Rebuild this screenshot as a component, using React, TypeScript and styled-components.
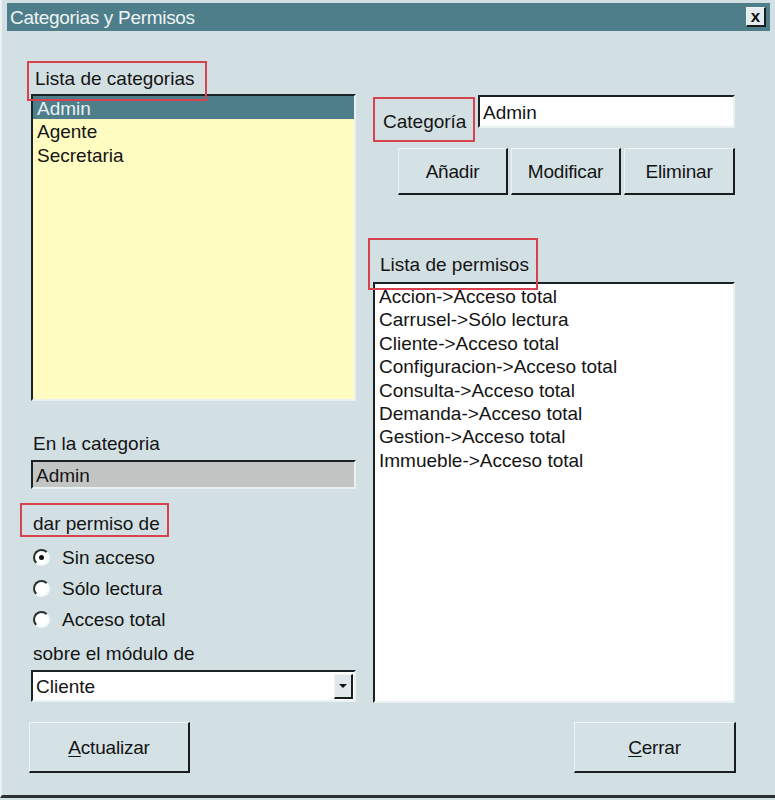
import React from 'react';
import styled, { createGlobalStyle, css } from 'styled-components';

const GlobalStyle = createGlobalStyle`
  html, body {
    margin: 0;
    padding: 0;
    background: #d3e0e3;
  }
  body {
    font-family: "Liberation Sans", Arial, sans-serif;
    color: #141414;
  }
`;

const sunken = css`
  border-style: solid;
  border-width: 2px;
  border-color: #1c2224 #e9f1f2 #e9f1f2 #1c2224;
`;

const raised = css`
  border-style: solid;
  border-width: 1px 2px 2px 1px;
  border-color: #eef4f5 #1a1d1e #1a1d1e #eef4f5;
`;

const Frame = styled.div`
  width: 775px;
  height: 798px;
  box-sizing: border-box;
  padding: 3px 5px 0 5px;
  border-left: 2px solid #eaf1f2;
  border-bottom: 3px solid #2b3133;
  display: flex;
  flex-direction: column;
`;

const TitleBar = styled.div`
  height: 28px;
  background: #4f7e8b;
  display: flex;
  align-items: center;
  justify-content: space-between;
  padding: 0 4px 0 3px;
`;

const Title = styled.span`
  color: #eef3f4;
  font-size: 19px;
  letter-spacing: -0.3px;
  padding-top: 2px;
`;

const CloseButton = styled.div`
  width: 20px;
  height: 20px;
  box-sizing: border-box;
  background: #e4ecee;
  ${raised};
  display: flex;
  align-items: center;
  justify-content: center;
  font-weight: bold;
  font-size: 17px;
  line-height: 1;
  color: #111;
`;

const Body = styled.div`
  flex: 1;
  display: flex;
  flex-direction: column;
  padding: 36px 35px 0 24px;
`;

const Columns = styled.div`
  display: flex;
  gap: 17px;
`;

const LeftColumn = styled.div`
  width: 325px;
  display: flex;
  flex-direction: column;
`;

const RightColumn = styled.div`
  width: 362px;
  display: flex;
  flex-direction: column;
`;

const Label = styled.div<{ $indent?: number; $top?: number }>`
  position: relative;
  font-size: 19px;
  height: 20px;
  line-height: 24px;
  margin-left: ${p => p.$indent ?? 2}px;
  margin-top: ${p => p.$top ?? 0}px;
  white-space: nowrap;
`;

// red annotation rectangle drawn over the label
const Mark = styled.span<{ $l: number; $t: number; $w: number; $h: number }>`
  position: absolute;
  left: ${p => p.$l}px;
  top: ${p => p.$t}px;
  width: ${p => p.$w}px;
  height: ${p => p.$h}px;
  box-sizing: border-box;
  border: 2px solid #d6434f;
  pointer-events: none;
`;

const ListBox = styled.div<{ $bg: string; $height: number; $top: number }>`
  ${sunken};
  background: ${p => p.$bg};
  height: ${p => p.$height}px;
  margin-top: ${p => p.$top}px;
  box-sizing: border-box;
  overflow: hidden;
`;

const ListRow = styled.div<{ $selected?: boolean }>`
  height: 23.4px;
  line-height: 26px;
  font-size: 19px;
  padding-left: 4px;
  white-space: nowrap;
  background: ${p => (p.$selected ? '#4f7e8b' : 'transparent')};
  color: ${p => (p.$selected ? '#e9f0f2' : '#141414')};
`;

const Field = styled.div<{ $bg: string; $height: number; $top: number; $width?: number }>`
  ${sunken};
  background: ${p => p.$bg};
  height: ${p => p.$height}px;
  margin-top: ${p => p.$top}px;
  width: ${p => (p.$width ? `${p.$width}px` : 'auto')};
  box-sizing: border-box;
  display: flex;
  align-items: center;
  justify-content: space-between;
  padding-left: 3px;
  font-size: 19px;
`;

const FieldText = styled.span`
  padding-top: 2px;
`;

const RadioGroup = styled.div`
  margin-top: 9px;
  display: flex;
  flex-direction: column;
`;

const RadioRow = styled.div`
  height: 31px;
  display: flex;
  align-items: center;
  gap: 12px;
  padding: 2px 0 0 2px;
  box-sizing: border-box;
  font-size: 19px;
`;

const RadioDot = styled.span<{ $checked?: boolean }>`
  width: 17px;
  height: 17px;
  box-sizing: border-box;
  border-radius: 50%;
  background: #ffffff;
  border: 2px solid;
  border-color: #2a2f30 #f4f8f9 #f4f8f9 #2a2f30;
  display: flex;
  align-items: center;
  justify-content: center;
  &::after {
    content: '';
    width: 5px;
    height: 5px;
    border-radius: 50%;
    background: ${p => (p.$checked ? '#111' : 'transparent')};
  }
`;

const DropButton = styled.div`
  width: 19px;
  height: 25px;
  margin-right: 1px;
  background: #dfe8ea;
  ${raised};
  box-sizing: border-box;
  display: flex;
  align-items: center;
  justify-content: center;
  &::after {
    content: '';
    border-left: 4px solid transparent;
    border-right: 4px solid transparent;
    border-top: 4px solid #111;
  }
`;

const CategoryRow = styled.div`
  margin-top: 28px;
  height: 47px;
  display: flex;
  align-items: flex-start;
`;

const CategoryLabel = styled.div`
  position: relative;
  width: 105px;
  height: 47px;
  box-sizing: border-box;
  display: flex;
  align-items: flex-end;
  padding: 0 0 9px 10px;
  font-size: 19px;
`;

const ButtonRow = styled.div`
  display: flex;
  gap: 3px;
  margin: 6px 0 0 25px;
`;

const Button = styled.div<{ $width: number; $height?: number }>`
  width: ${p => p.$width}px;
  height: ${p => p.$height ?? 47}px;
  box-sizing: border-box;
  background: #d5e2e5;
  ${raised};
  display: flex;
  align-items: center;
  justify-content: center;
  padding-top: 2px;
  font-size: 19px;
  letter-spacing: -0.2px;
`;

const Footer = styled.div`
  margin: 19px -1px 0 -2px;
  display: flex;
  justify-content: space-between;
`;

const Key = styled.span`
  text-decoration: underline;
  text-underline-offset: 2px;
`;

const categories = ['Admin', 'Agente', 'Secretaria'];

const permissions = [
  'Accion->Acceso total',
  'Carrusel->Sólo lectura',
  'Cliente->Acceso total',
  'Configuracion->Acceso total',
  'Consulta->Acceso total',
  'Demanda->Acceso total',
  'Gestion->Acceso total',
  'Immueble->Acceso total',
];

const access = [
  { label: 'Sin acceso', checked: true },
  { label: 'Sólo lectura', checked: false },
  { label: 'Acceso total', checked: false },
];

const App: React.FC = () => (
  <>
    <GlobalStyle />
    <Frame>
      <TitleBar>
        <Title>Categorias y Permisos</Title>
        <CloseButton>x</CloseButton>
      </TitleBar>
      <Body>
        <Columns>
          <LeftColumn>
            <Label $indent={4}>
              Lista de categorias
              <Mark $l={-8} $t={-6} $w={180} $h={40} />
            </Label>
            <ListBox $bg="#fffcc2" $height={307} $top={7}>
              {categories.map((c, i) => (
                <ListRow key={c} $selected={i === 0}>{c}</ListRow>
              ))}
            </ListBox>
            <Label $top={31}>En la categoria</Label>
            <Field $bg="#c3c5c5" $height={29} $top={8}>
              <FieldText>Admin</FieldText>
            </Field>
            <Label $top={23}>
              dar permiso de
              <Mark $l={-13} $t={-9} $w={149} $h={34} />
            </Label>
            <RadioGroup>
              {access.map(a => (
                <RadioRow key={a.label}>
                  <RadioDot $checked={a.checked} />
                  {a.label}
                </RadioRow>
              ))}
            </RadioGroup>
            <Label $top={8}>sobre el módulo de</Label>
            <Field $bg="#ffffff" $height={32} $top={8}>
              <FieldText>Cliente</FieldText>
              <DropButton />
            </Field>
          </LeftColumn>
          <RightColumn>
            <CategoryRow>
              <CategoryLabel>
                Categoría
                <Mark $l={0} $t={2} $w={102} $h={45} />
              </CategoryLabel>
              <Field $bg="#ffffff" $height={33} $top={0} $width={257}>
                <FieldText>Admin</FieldText>
              </Field>
            </CategoryRow>
            <ButtonRow>
              <Button $width={110}>Añadir</Button>
              <Button $width={110}>Modificar</Button>
              <Button $width={111}>Eliminar</Button>
            </ButtonRow>
            <Label $indent={7} $top={58}>
              Lista de permisos
              <Mark $l={-12} $t={-15} $w={170} $h={52} />
            </Label>
            <ListBox $bg="#ffffff" $height={421} $top={9}>
              {permissions.map(p => (
                <ListRow key={p}>{p}</ListRow>
              ))}
            </ListBox>
          </RightColumn>
        </Columns>
        <Footer>
          <Button $width={161} $height={51}>
            <span><Key>A</Key>ctualizar</span>
          </Button>
          <Button $width={162} $height={51}>
            <span><Key>C</Key>errar</span>
          </Button>
        </Footer>
      </Body>
    </Frame>
  </>
);

export default App;
